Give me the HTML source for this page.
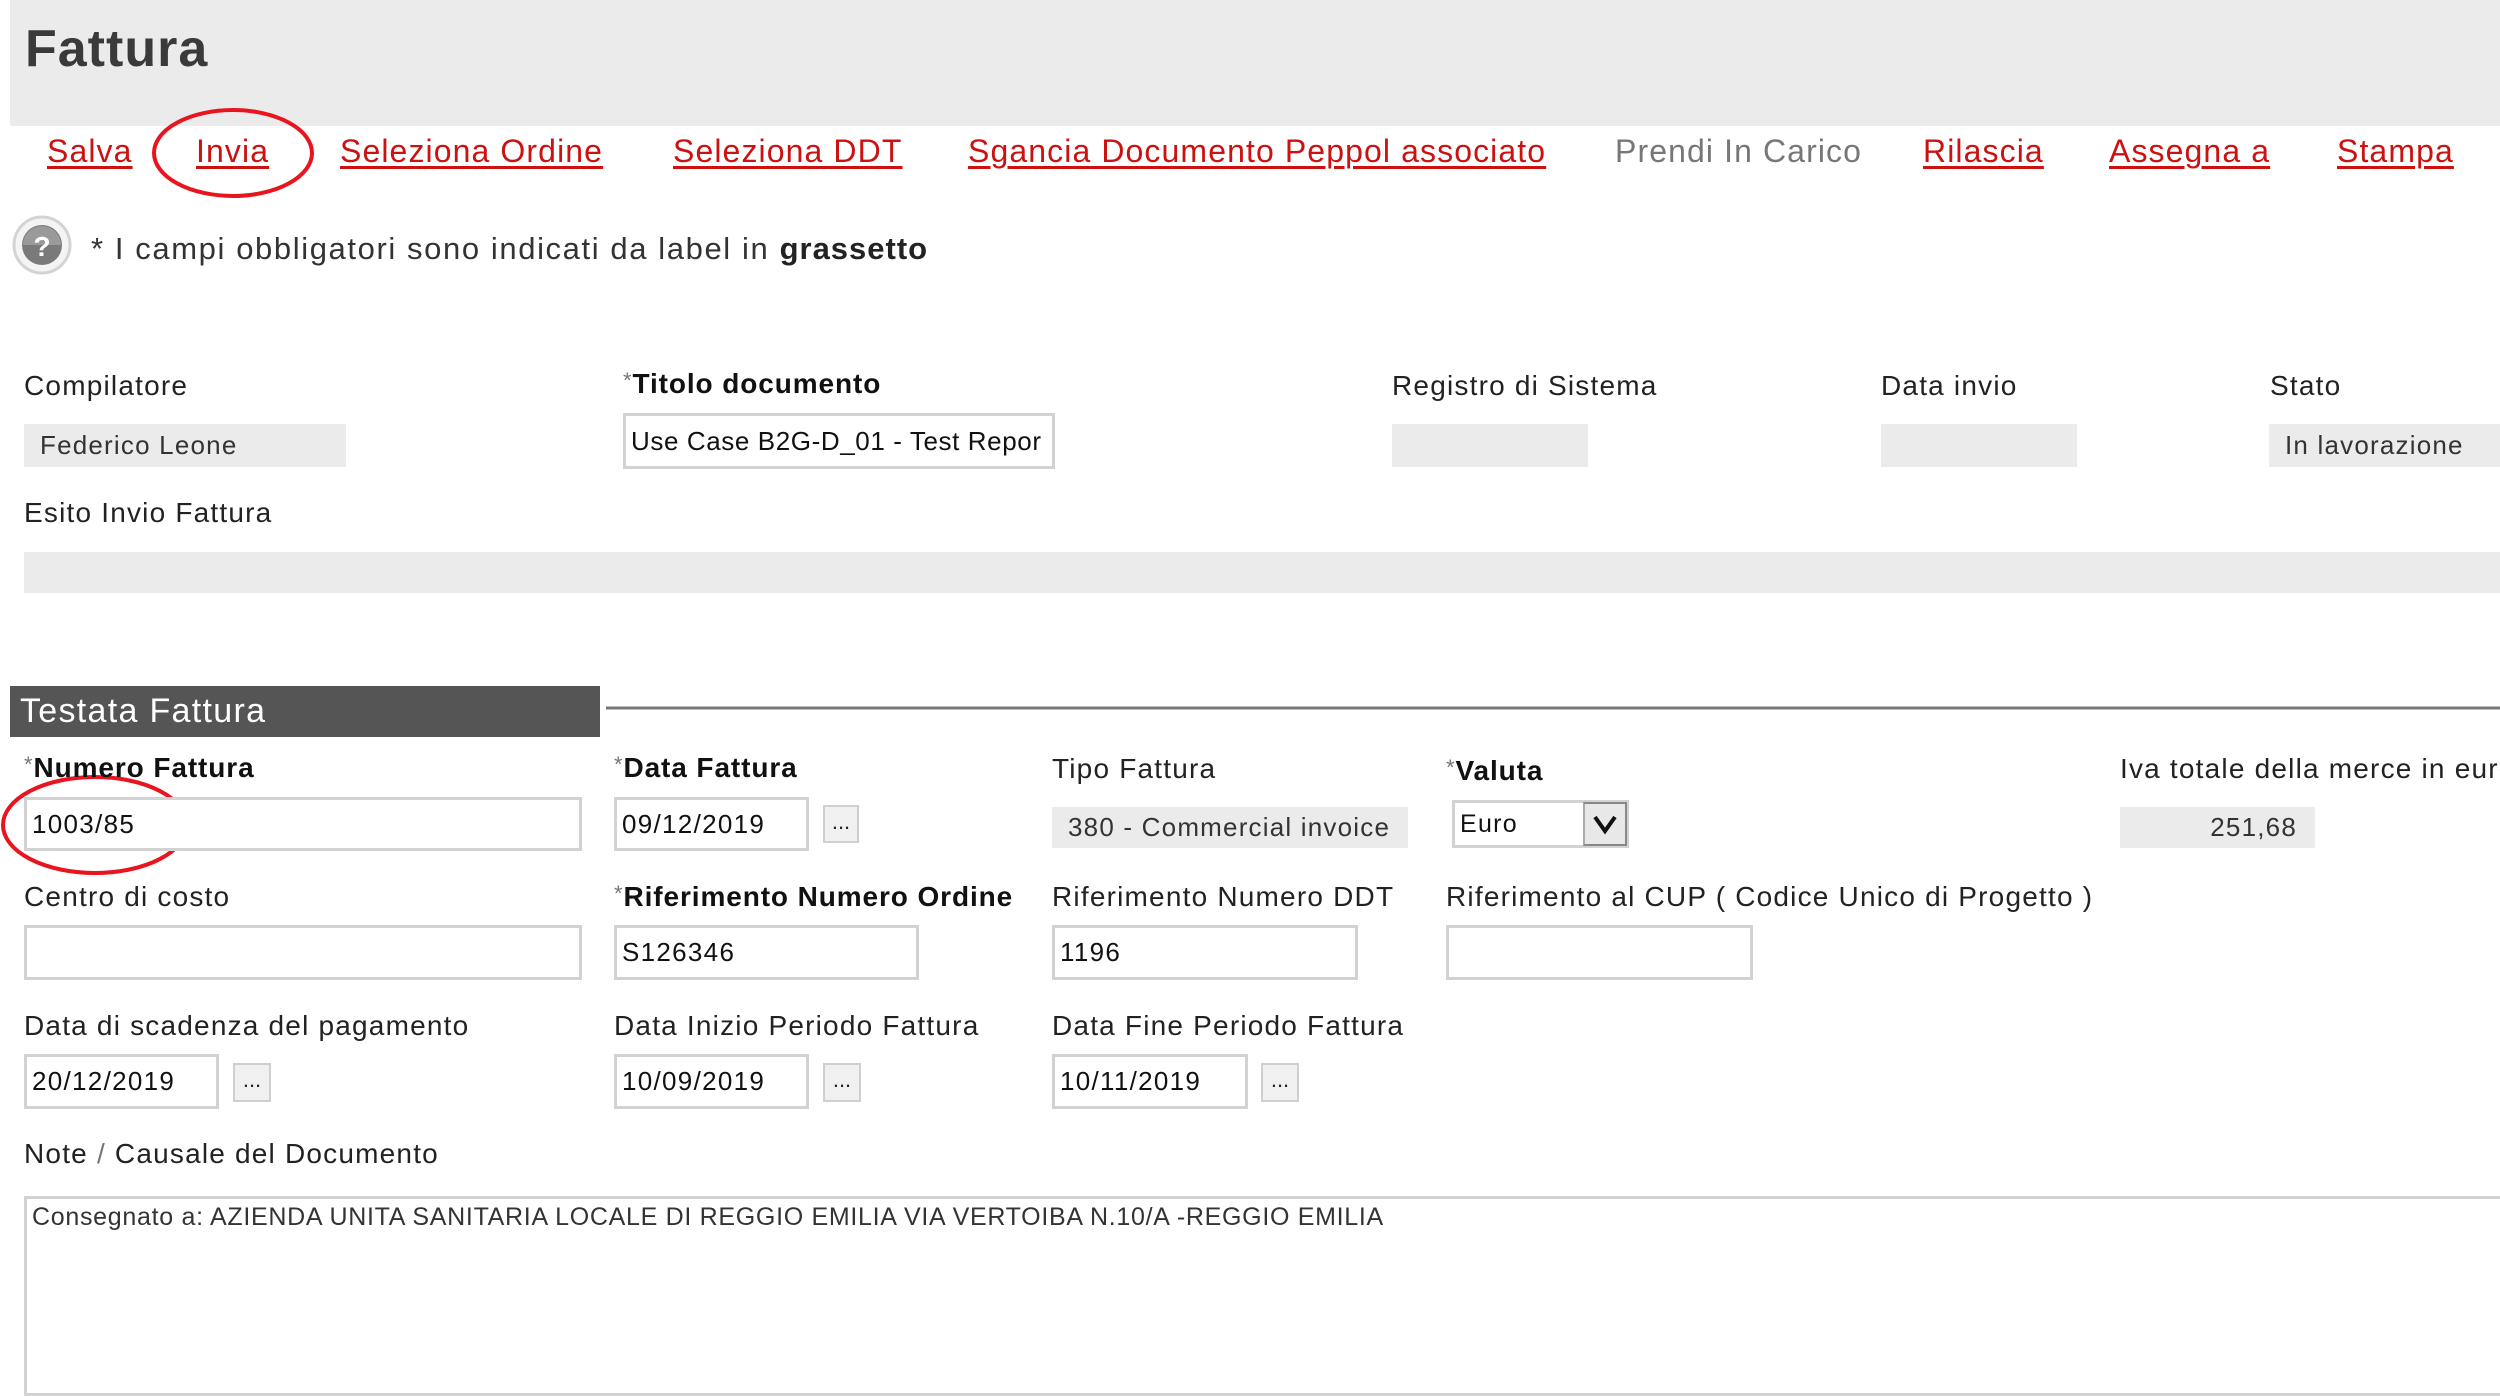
<!DOCTYPE html>
<html><head><meta charset="utf-8"><style>
*{margin:0;padding:0;box-sizing:border-box}
body{width:2500px;height:1333px;overflow:hidden;background:#fff;font-family:"Liberation Sans",sans-serif;color:#222;position:relative}
.a{position:absolute;white-space:nowrap;line-height:1}
.lk{font-size:32px;color:#cc1111;text-decoration:underline;text-decoration-thickness:3px;text-underline-offset:4px;top:135px;letter-spacing:1.1px}
.lb{font-size:28px;color:#222;letter-spacing:1.2px}
.b{font-weight:bold;color:#111;letter-spacing:0.9px}
.st{font-weight:normal;color:#777;font-size:22px;vertical-align:top}
.g{position:absolute;background:#ebebeb;font-size:26px;color:#333;padding-left:16px;display:flex;align-items:center;letter-spacing:1.2px}
.in{position:absolute;background:#fff;border:3px solid #d2d2d2;font-size:26px;color:#111;padding-left:5px;display:flex;align-items:center;letter-spacing:1.3px}
.bt{position:absolute;background:#f0f0f0;border:2px solid #cfcfcf;font-size:22px;color:#222;text-align:center;line-height:30px}
</style></head><body>
<div style="position:absolute;left:10px;top:0;width:2490px;height:126px;background:#ebebeb"></div>
<div class="a" style="left:25px;top:23px;font-size:52px;font-weight:bold;color:#3a3a3a;letter-spacing:1px">Fattura</div>

<div class="a lk" style="left:47px">Salva</div>
<div class="a lk" style="left:196px">Invia</div>
<div class="a lk" style="left:340px">Seleziona Ordine</div>
<div class="a lk" style="left:673px">Seleziona DDT</div>
<div class="a lk" style="left:968px">Sgancia Documento Peppol associato</div>
<div class="a" style="left:1615px;top:135px;font-size:32px;color:#777;letter-spacing:1.1px">Prendi In Carico</div>
<div class="a lk" style="left:1923px">Rilascia</div>
<div class="a lk" style="left:2109px">Assegna a</div>
<div class="a lk" style="left:2337px">Stampa</div>

<svg style="position:absolute;left:0;top:0" width="2500" height="1333">
<ellipse cx="233" cy="153" rx="79" ry="43" fill="none" stroke="#e8141e" stroke-width="4"/>
<ellipse cx="95" cy="825" rx="92" ry="48" fill="none" stroke="#e8141e" stroke-width="4"/>
<circle cx="42" cy="245" r="28" fill="#f4f4f4" stroke="#d4d4d4" stroke-width="3"/>
<circle cx="42" cy="245" r="20" fill="#7a7a7a"/>
<path d="M23 245 A19 19 0 0 1 61 245 Z" fill="#9a9a9a"/>
<text x="42" y="256" font-family="Liberation Sans" font-weight="bold" font-size="28" fill="#fff" text-anchor="middle">?</text>
<line x1="606" y1="708" x2="2500" y2="708" stroke="#777" stroke-width="3"/>
</svg>
<div class="a" style="left:91px;top:233px;font-size:31px;color:#333;letter-spacing:1.6px">* I campi obbligatori sono indicati da label in <b style="color:#222;letter-spacing:1px">grassetto</b></div>

<div class="a lb" style="left:24px;top:372px">Compilatore</div>
<div class="a lb b" style="left:623px;top:370px"><span class="st">*</span>Titolo documento</div>
<div class="a lb" style="left:1392px;top:372px">Registro di Sistema</div>
<div class="a lb" style="left:1881px;top:372px">Data invio</div>
<div class="a lb" style="left:2270px;top:372px">Stato</div>
<div class="g" style="left:24px;top:424px;width:322px;height:43px">Federico Leone</div>
<div class="in" style="left:623px;top:413px;width:432px;height:56px;overflow:hidden;letter-spacing:0.6px">Use Case B2G-D_01 - Test Repor</div>
<div class="g" style="left:1392px;top:424px;width:196px;height:43px"></div>
<div class="g" style="left:1881px;top:424px;width:196px;height:43px"></div>
<div class="g" style="left:2269px;top:424px;width:231px;height:43px">In lavorazione</div>

<div class="a lb" style="left:24px;top:499px">Esito Invio Fattura</div>
<div class="g" style="left:24px;top:552px;width:2476px;height:41px"></div>

<div style="position:absolute;left:10px;top:686px;width:590px;height:51px;background:#555"></div>
<div class="a" style="left:20px;top:694px;font-size:34px;color:#fff;letter-spacing:1.3px">Testata Fattura</div>

<div class="a lb b" style="left:24px;top:754px"><span class="st">*</span>Numero Fattura</div>
<div class="a lb b" style="left:614px;top:754px"><span class="st">*</span>Data Fattura</div>
<div class="a lb" style="left:1052px;top:755px">Tipo Fattura</div>
<div class="a lb b" style="left:1446px;top:757px"><span class="st">*</span>Valuta</div>
<div class="a lb" style="left:2120px;top:755px">Iva totale della merce in euro</div>
<div class="in" style="left:24px;top:797px;width:558px;height:54px">1003/85</div>
<div class="in" style="left:614px;top:797px;width:195px;height:54px">09/12/2019</div>
<div class="bt" style="left:823px;top:805px;width:36px;height:38px">...</div>
<div class="g" style="left:1052px;top:807px;width:356px;height:41px">380 - Commercial invoice</div>
<div class="in" style="left:1452px;top:800px;width:177px;height:48px;font-size:25px">Euro</div>
<div style="position:absolute;left:1583px;top:802px;width:44px;height:44px;background:#e8e8e8;border:2px solid #888;border-left:2px solid #aaa"></div>
<svg style="position:absolute;left:1590px;top:812px" width="30" height="24"><path d="M5 5 L15 19 L25 5" fill="none" stroke="#111" stroke-width="4"/></svg>
<div class="g" style="left:2120px;top:807px;width:195px;height:41px;justify-content:flex-end;padding-right:18px">251,68</div>

<div class="a lb" style="left:24px;top:883px">Centro di costo</div>
<div class="a lb b" style="left:614px;top:883px"><span class="st">*</span>Riferimento Numero Ordine</div>
<div class="a lb" style="left:1052px;top:883px">Riferimento Numero DDT</div>
<div class="a lb" style="left:1446px;top:883px">Riferimento al CUP ( Codice Unico di Progetto )</div>
<div class="in" style="left:24px;top:925px;width:558px;height:55px"></div>
<div class="in" style="left:614px;top:925px;width:305px;height:55px">S126346</div>
<div class="in" style="left:1052px;top:925px;width:306px;height:55px">1196</div>
<div class="in" style="left:1446px;top:925px;width:307px;height:55px"></div>

<div class="a lb" style="left:24px;top:1012px">Data di scadenza del pagamento</div>
<div class="a lb" style="left:614px;top:1012px">Data Inizio Periodo Fattura</div>
<div class="a lb" style="left:1052px;top:1012px">Data Fine Periodo Fattura</div>
<div class="in" style="left:24px;top:1054px;width:195px;height:55px">20/12/2019</div>
<div class="bt" style="left:233px;top:1063px;width:38px;height:39px">...</div>
<div class="in" style="left:614px;top:1054px;width:195px;height:55px">10/09/2019</div>
<div class="bt" style="left:823px;top:1063px;width:38px;height:39px">...</div>
<div class="in" style="left:1052px;top:1054px;width:196px;height:55px">10/11/2019</div>
<div class="bt" style="left:1261px;top:1063px;width:38px;height:39px">...</div>

<div class="a lb" style="left:24px;top:1140px">Note <span style="color:#777">/</span> Causale del Documento</div>
<div style="position:absolute;left:24px;top:1196px;width:2490px;height:200px;border:3px solid #d2d2d2;background:#fff"></div>
<div class="a" style="left:32px;top:1205px;font-size:25px;color:#333;letter-spacing:0.7px">Consegnato a: AZIENDA UNITA SANITARIA LOCALE DI REGGIO EMILIA VIA VERTOIBA N.10/A -REGGIO EMILIA</div>
</body></html>
